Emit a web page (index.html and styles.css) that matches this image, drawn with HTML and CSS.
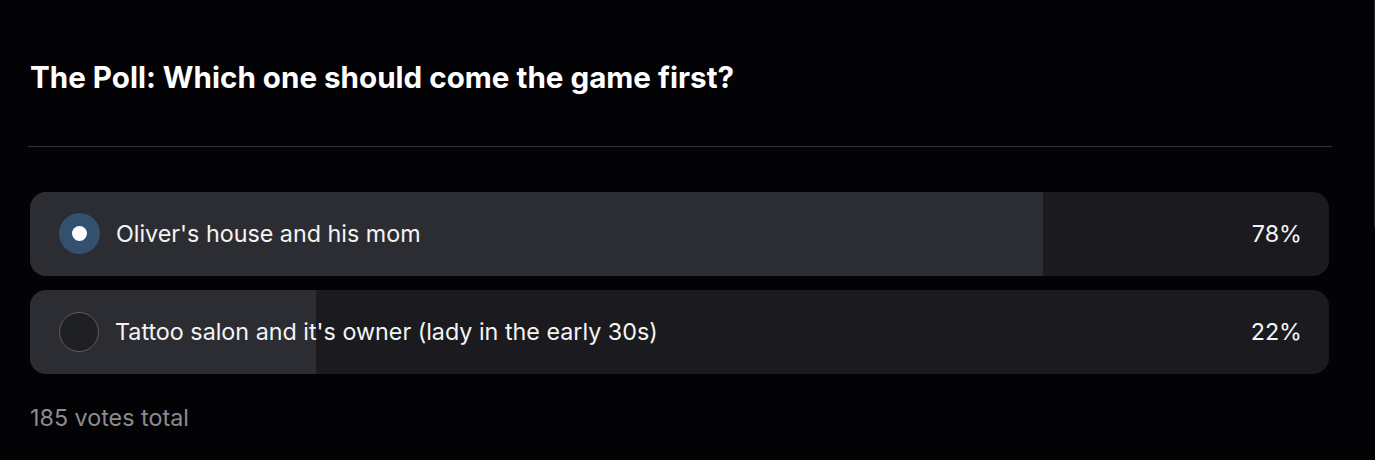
FILE: index.html
```html
<!DOCTYPE html>
<html>
<head>
<meta charset="utf-8">
<link rel="stylesheet" href="styles.css">
</head>
<body>
<div class="scroll-edge"></div>
<main class="poll">
  <h1 class="poll-title">The Poll: Which one should come the game first?</h1>
  <hr class="divider">
  <div class="options">
    <div class="option">
      <div class="fill" style="width:78%"></div>
      <div class="option-content">
        <span class="radio radio-selected"><span class="dot"></span></span>
        <span class="label">Oliver's house and his mom</span>
        <span class="pct">78%</span>
      </div>
    </div>
    <div class="option">
      <div class="fill" style="width:22%"></div>
      <div class="option-content">
        <span class="radio"></span>
        <span class="label">Tattoo salon and it's owner (lady in the early 30s)</span>
        <span class="pct">22%</span>
      </div>
    </div>
  </div>
  <p class="total">185 votes total</p>
</main>
</body>
</html>
```
FILE: styles.css
```css
html, body {
  margin: 0;
  padding: 0;
  background: #030204;
  height: 100%;
  overflow: hidden;
}
body {
  font-family: Inter, "Liberation Sans", sans-serif;
  color: #f2f2f2;
  position: relative;
}
.scroll-edge {
  position: absolute;
  right: 0;
  top: 0;
  width: 1px;
  height: 227px;
  background: #26262a;
}
.poll {
  width: 1300px;
  padding: 57px 0 0 30px;
}
.poll-title {
  margin: 0;
  font-size: 29.6px;
  line-height: 40px;
  font-weight: 700;
  color: #ffffff;
}
.divider {
  border: 0;
  height: 1px;
  background: #333336;
  margin: 49px 0 0 -2px;
  width: 1304px;
}
.options {
  margin-top: 45px;
  display: flex;
  flex-direction: column;
  gap: 14px;
}
.option {
  position: relative;
  height: 84px;
  width: 1299px;
  border-radius: 16px;
  background: #1b1b1f;
  overflow: hidden;
}
.fill {
  position: absolute;
  left: 0;
  top: 0;
  bottom: 0;
  background: #2c2d32;
}
.option-content {
  position: relative;
  display: flex;
  align-items: center;
  height: 100%;
  padding: 0 27px 0 29px;
}
.radio {
  width: 40px;
  height: 40px;
  border-radius: 50%;
  box-sizing: border-box;
  border: 1px solid #5c5c60;
  background: #1f2024;
  display: flex;
  align-items: center;
  justify-content: center;
  flex: none;
  margin-top: -1px;
}
.radio-selected {
  border: 0;
  width: 41px;
  height: 41px;
  background: #33506e;
}
.dot {
  width: 15px;
  height: 15px;
  border-radius: 50%;
  background: #ffffff;
}
.label {
  margin-left: 16px;
  font-size: 23.3px;
  color: #f4f4f4;
  flex: 1;
  margin-top: -2px;
}
.pct {
  font-size: 23.3px;
  color: #f4f4f4;
  margin-top: -2px;
}
.total {
  margin: 29px 0 0;
  font-size: 23.3px;
  color: #8b8b90;
}
```
